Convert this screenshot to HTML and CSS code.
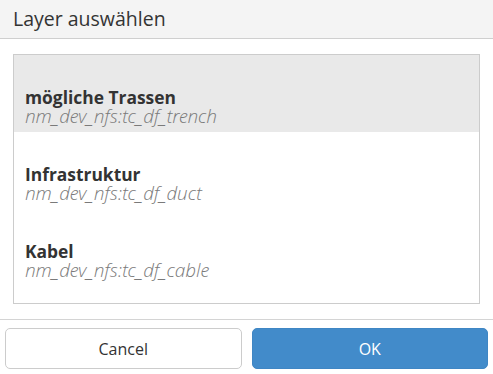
FILE: index.html
```html
<!DOCTYPE html>
<html>
<head>
<meta charset="utf-8">
<link rel="stylesheet" href="styles.css">
</head>
<body>
<div class="dialog">
  <div class="header">Layer auswählen</div>
  <div class="body">
    <div class="list">
      <div class="item selected">
        <div class="title">mögliche Trassen</div>
        <div class="sub">nm_dev_nfs:tc_df_trench</div>
      </div>
      <div class="item">
        <div class="title">Infrastruktur</div>
        <div class="sub">nm_dev_nfs:tc_df_duct</div>
      </div>
      <div class="item">
        <div class="title">Kabel</div>
        <div class="sub">nm_dev_nfs:tc_df_cable</div>
      </div>
    </div>
  </div>
  <div class="footer">
    <button class="btn cancel">Cancel</button>
    <button class="btn ok">OK</button>
  </div>
</div>
</body>
</html>
```
FILE: styles.css
```css
html, body {
  margin: 0;
  padding: 0;
  background: #fff;
}
body {
  font-family: "Open Sans", "Noto Sans", sans-serif;
  color: #333;
  width: 493px;
  height: 374px;
  overflow: hidden;
}
.dialog {
  display: flex;
  flex-direction: column;
  height: 374px;
}
.header {
  box-sizing: border-box;
  height: 39px;
  background: #f4f4f4;
  border-bottom: 1px solid #cfcfcf;
  font-size: 19.5px;
  line-height: 38px;
  padding-left: 13px;
  color: #333;
}
.body {
  padding: 15px 13px 15px 13px;
  border-bottom: 1px solid #d4d4d4;
}
.list {
  height: 250px;
  box-sizing: border-box;
  border: 1px solid #cccccc;
  display: flex;
  flex-direction: column;
}
.item {
  height: 77px;
  box-sizing: border-box;
  padding: 33px 11px 0 11px;
}
.item.selected {
  background: #e9e9e9;
}
.title {
  font-weight: 700;
  font-size: 17.4px;
  line-height: 19px;
  color: #333;
}
.sub {
  font-family: "Open Sans Light", "Open Sans", sans-serif;
  font-style: italic;
  font-weight: 300;
  font-size: 19px;
  line-height: 19px;
  color: #7a7a7a;
}
.footer {
  display: flex;
  gap: 10px;
  padding: 8px 5px 5px 5px;
}
.btn {
  flex: 1;
  height: 41px;
  border-radius: 5px;
  font-family: "Open Sans", "Noto Sans", sans-serif;
  font-size: 16px;
  cursor: pointer;
}
.cancel {
  background: #fff;
  border: 1px solid #cccccc;
  color: #333;
}
.ok {
  background: #428bca;
  border: 1px solid #3f86c4;
  color: #fff;
}
```
